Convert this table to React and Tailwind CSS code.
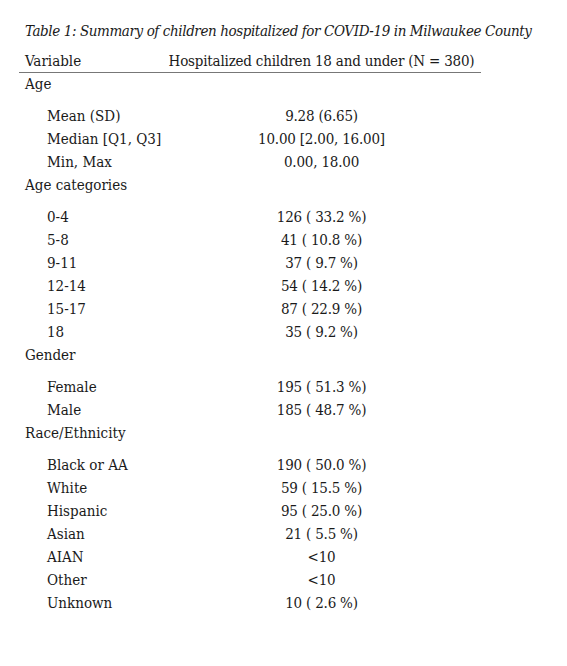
import React from "react";

const groups = [
  {
    label: "Age",
    rows: [
      ["Mean (SD)", "9.28 (6.65)"],
      ["Median [Q1, Q3]", "10.00 [2.00, 16.00]"],
      ["Min, Max", "0.00, 18.00"],
    ],
  },
  {
    label: "Age categories",
    rows: [
      ["0-4", "126 ( 33.2 %)"],
      ["5-8", "41 ( 10.8 %)"],
      ["9-11", "37 ( 9.7 %)"],
      ["12-14", "54 ( 14.2 %)"],
      ["15-17", "87 ( 22.9 %)"],
      ["18", "35 ( 9.2 %)"],
    ],
  },
  {
    label: "Gender",
    rows: [
      ["Female", "195 ( 51.3 %)"],
      ["Male", "185 ( 48.7 %)"],
    ],
  },
  {
    label: "Race/Ethnicity",
    rows: [
      ["Black or AA", "190 ( 50.0 %)"],
      ["White", "59 ( 15.5 %)"],
      ["Hispanic", "95 ( 25.0 %)"],
      ["Asian", "21 ( 5.5 %)"],
      ["AIAN", "<10"],
      ["Other", "<10"],
      ["Unknown", "10 ( 2.6 %)"],
    ],
  },
];

const App = () => {
  return (
    <div
      className="min-h-[666px] w-[567px] bg-white pt-[20px] text-[#1a1a1a] text-[15px] leading-[23px]"
      style={{ fontFamily: '"DejaVu Serif Condensed", "Liberation Serif", serif' }}
    >
      <p className="pl-[25px] italic tracking-[-0.4px]">
        Table 1: Summary of children hospitalized for COVID-19 in Milwaukee County
      </p>

      <div className="ml-[19px] mt-[7px] w-[462px]">
        {/* header */}
        <div className="grid grid-cols-[143px_1fr] h-[23px] border-b border-[#777]">
          <div className="pl-[6px]">Variable</div>
          <div className="text-center tracking-[-0.2px]">Hospitalized children 18 and under (N = 380)</div>
        </div>

        {groups.map((g) => (
          <div key={g.label}>
            <div className="pl-[6px] mb-[9px]">{g.label}</div>
            {g.rows.map(([k, v]) => (
              <div key={k} className="grid grid-cols-[143px_1fr]">
                <div className="pl-[28px]">{k}</div>
                <div className="text-center tracking-[-0.2px]">{v}</div>
              </div>
            ))}
          </div>
        ))}
      </div>
    </div>
  );
};

export default App;
